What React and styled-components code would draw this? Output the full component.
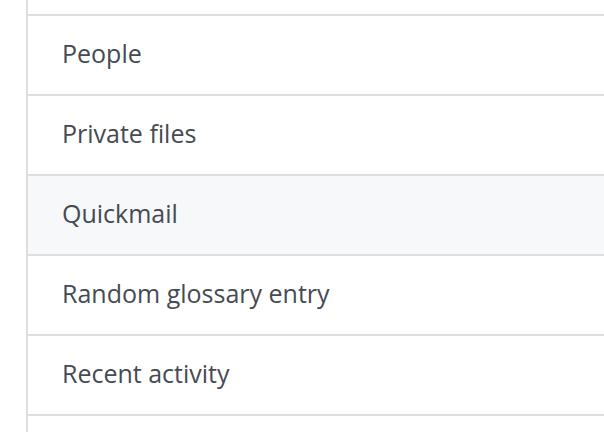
import React from "react";
import styled, { createGlobalStyle } from "styled-components";

const GlobalStyle = createGlobalStyle`
  html, body {
    margin: 0;
    padding: 0;
    background: #ffffff;
    overflow: hidden;
  }
`;

const Page = styled.div`
  padding-left: 26px;
  height: 432px;
  overflow: hidden;
`;

const List = styled.ul`
  list-style: none;
  margin: -64px -40px 0 0;
  padding: 0;
  border-left: 2px solid #dedede;
`;

const Item = styled.li`
  height: 78px;
  box-sizing: content-box;
  display: flex;
  align-items: center;
  padding: 0 0 5px 34px;
  height: 73px;
  border-bottom: 2px solid #dedede;
  background: ${(p) => (p.active ? "#f7f8fa" : "#ffffff")};
  font-family: "Open Sans", "Liberation Sans", sans-serif;
  font-size: 25px;
  color: #454b52;
`;

const items = [
  "",
  "People",
  "Private files",
  "Quickmail",
  "Random glossary entry",
  "Recent activity",
  "",
];

export default function App() {
  return (
    <Page>
      <GlobalStyle />
      <List>
        {items.map((label, i) => (
          <Item key={i} active={label === "Quickmail"}>
            {label}
          </Item>
        ))}
      </List>
    </Page>
  );
}
